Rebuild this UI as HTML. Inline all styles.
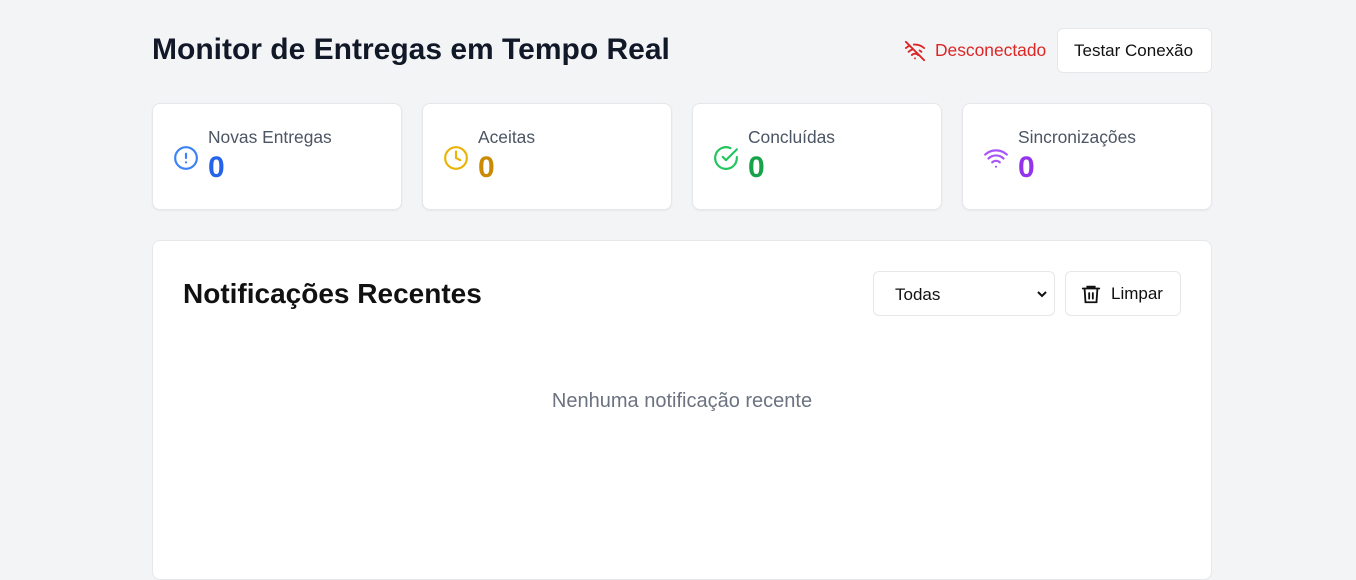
<!DOCTYPE html>
<html><head><meta charset="utf-8"><style>
*{box-sizing:border-box;margin:0;padding:0}
body{width:1356px;height:570px;overflow:hidden;background:#f3f4f6;font-family:"Liberation Sans",sans-serif;position:relative}
.abs{position:absolute}
h1{position:absolute;left:152px;top:33px;font-size:30px;font-weight:700;color:#111827}
.card{position:absolute;top:103px;width:250px;height:107px;background:#fff;border:1px solid #e5e7eb;border-radius:8px;box-shadow:0 1px 2px rgba(0,0,0,.05)}
.card svg{position:absolute;left:20px;top:41px}
.card .l{position:absolute;left:55px;top:23px;font-size:17.4px;color:#4b5563}
.card .n{position:absolute;left:55px;top:47px;font-size:30px;font-weight:700}
.panel{position:absolute;left:152px;top:240px;width:1060px;height:340px;background:#fff;border:1px solid #e5e7eb;border-radius:8px}
.btn{position:absolute;background:#fff;border:1px solid #e5e7eb;border-radius:6px;font-size:17px;color:#111}
</style></head><body>
<h1>Monitor de Entregas em Tempo Real</h1>
<svg class="abs" style="left:904px;top:40px" width="22" height="22" viewBox="0 0 24 24" fill="none" stroke="#dc2626" stroke-width="2" stroke-linecap="round"><path d="M2 2l20 20M8.5 16.4a5 5 0 0 1 7 0M5 12.9a10 10 0 0 1 5.2-2.8M19 12.9a10 10 0 0 0-2-1.5M2 8.8a15 15 0 0 1 4.2-2.6M22 8.8A15 15 0 0 0 10.7 5M12 20h.01"/></svg>
<div class="abs" style="left:935px;top:40px;font-size:17.4px;color:#dc2626">Desconectado</div>
<div class="btn" style="left:1057px;top:28px;width:155px;height:45px;padding:12px 0 0 16px">Testar Conexão</div>

<div class="card" style="left:152px"><svg width="26" height="26" viewBox="0 0 24 24" fill="none" stroke="#3b82f6" stroke-width="2" stroke-linecap="round"><circle cx="12" cy="12" r="10"/><path d="M12 8v4M12 16h.01"/></svg><div class="l">Novas Entregas</div><div class="n" style="color:#2563eb">0</div></div>
<div class="card" style="left:422px"><svg width="26" height="26" viewBox="0 0 24 24" fill="none" stroke="#eab308" stroke-width="2" stroke-linecap="round"><circle cx="12" cy="12" r="10"/><path d="M12 6v6l4 2"/></svg><div class="l">Aceitas</div><div class="n" style="color:#ca8a04">0</div></div>
<div class="card" style="left:692px"><svg width="26" height="26" viewBox="0 0 24 24" fill="none" stroke="#22c55e" stroke-width="2" stroke-linecap="round" stroke-linejoin="round"><path d="M22 11.1V12a10 10 0 1 1-5.9-9.1"/><path d="M22 4L12 14l-3-3"/></svg><div class="l">Concluídas</div><div class="n" style="color:#16a34a">0</div></div>
<div class="card" style="left:962px"><svg width="26" height="26" viewBox="0 0 24 24" fill="none" stroke="#a855f7" stroke-width="2" stroke-linecap="round"><path d="M5 12.5a10 10 0 0 1 14 0M8.5 16a5 5 0 0 1 7 0M2 8.8a15 15 0 0 1 20 0M12 20h.01"/></svg><div class="l">Sincronizações</div><div class="n" style="color:#9333ea">0</div></div>

<div class="panel">
<div class="abs" style="left:30px;top:37px;font-size:28px;font-weight:700;color:#111">Notificações Recentes</div>
<div class="btn" style="left:720px;top:30px;width:182px;height:45px;padding:13px 0 0 21px">Todas
<svg class="abs" style="left:162px;top:17px" width="12" height="10" viewBox="0 0 12 10" fill="none" stroke="#111" stroke-width="2"><path d="M2 3l4 4 4-4"/></svg></div>
<div class="btn" style="left:912px;top:30px;width:116px;height:45px;padding:12px 0 0 45px">Limpar
<svg class="abs" style="left:14px;top:11px" width="22" height="22" viewBox="0 0 24 24" fill="none" stroke="#111" stroke-width="2" stroke-linecap="round"><path d="M3 6h18M8 6V4h8v2M5 6l1 15h12l1-15M10 11v6M14 11v6"/></svg></div>
<div class="abs" style="left:0;width:100%;top:149px;text-align:center;font-size:20px;color:#6b7280">Nenhuma notificação recente</div>
</div>
</body></html>
